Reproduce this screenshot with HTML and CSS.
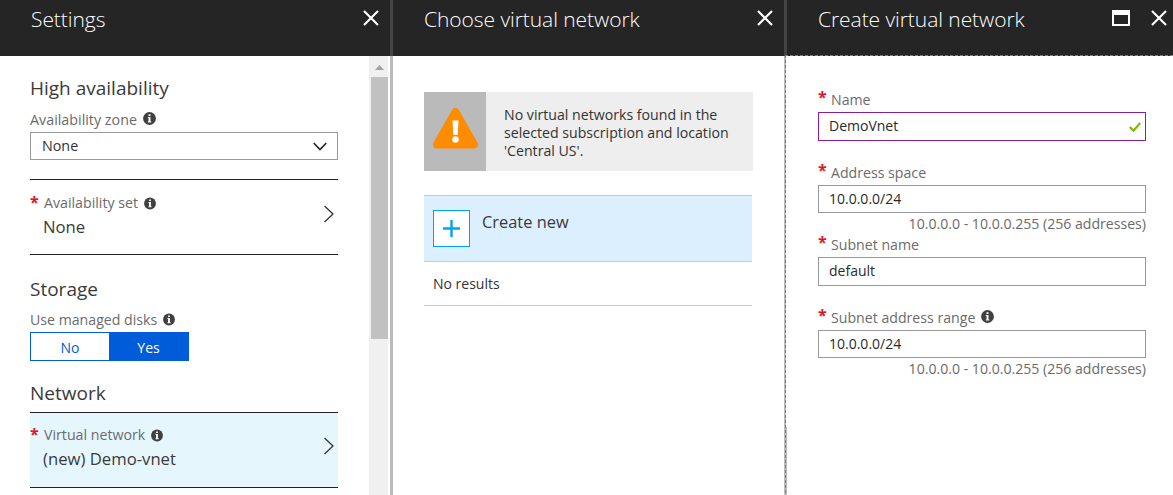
FILE: index.html
```html
<!DOCTYPE html>
<html lang="en">
<head>
<meta charset="utf-8">
<title>Create virtual network</title>
<link rel="stylesheet" href="styles.css">
</head>
<body>
<svg class="defs" width="0" height="0" aria-hidden="true">
  <symbol id="close" viewBox="0 0 16 16"><path d="M1 1 15 15M15 1 1 15" fill="none" stroke="#fff" stroke-width="2.1"/></symbol>
  <symbol id="info" viewBox="0 0 13 13"><circle cx="6.5" cy="6.5" r="6.4" fill="#404040"/><path d="M5.500 2.200h2v1.700h-2zM4.800 5h2.700v4.600h.8v1H4.800v-1h.7V6h-.7z" fill="#fff"/></symbol>
  <symbol id="next" viewBox="0 0 12 18"><path d="M1.5 1 10 9 1.5 17" fill="none" stroke="#333" stroke-width="1.3"/></symbol>
</svg>
<main class="blades">
  <section class="blade">
    <header class="bar"><h1>Settings</h1><svg class="close"><use href="#close"/></svg></header>
    <div class="content">
      <div class="form">
        <h2>High availability</h2>
        <div class="label zone"><span>Availability zone</span><svg class="info"><use href="#info"/></svg></div>
        <div class="select"><span>None</span><svg class="down" viewBox="0 0 14 9"><path d="M.7 1 7 7.5 13.3 1" fill="none" stroke="#222" stroke-width="1.6"/></svg></div>
        <div class="picker set">
          <b class="star">*</b>
          <div class="picked"><div class="label"><span>Availability set</span><svg class="info small"><use href="#info"/></svg></div><div class="value">None</div></div>
          <svg class="next"><use href="#next"/></svg>
        </div>
        <h2 class="storage">Storage</h2>
        <div class="label disks"><span>Use managed disks</span><svg class="info small"><use href="#info"/></svg></div>
        <div class="toggle"><span>No</span><span class="on">Yes</span></div>
        <h2 class="network">Network</h2>
        <div class="picker active">
          <b class="star">*</b>
          <div class="picked"><div class="label"><span>Virtual network</span><svg class="info small"><use href="#info"/></svg></div><div class="value">(new) Demo-vnet</div></div>
          <svg class="next"><use href="#next"/></svg>
        </div>
      </div>
      <div class="scrollbar"><i class="up"></i><i class="thumb"></i></div>
    </div>
  </section>
  <div class="divider"></div>
  <section class="blade second">
    <header class="bar"><h1>Choose virtual network</h1><svg class="close"><use href="#close"/></svg></header>
    <div class="list">
      <div class="notice">
        <div class="warn"><svg width="45" height="41" viewBox="0 0 45 41"><path d="M22.5 4 41 36.500H4Z" fill="#ff8c00" stroke="#ff8c00" stroke-width="8" stroke-linejoin="round"/><path d="M19.500 12.500h6l-.8 14.500h-4.400z" fill="#fff"/><circle cx="22.500" cy="31.500" r="3.200" fill="#fff"/></svg></div>
        <p>No virtual networks found in the<br>selected subscription and location<br>'Central US'.</p>
      </div>
      <div class="create"><span class="plus"><svg width="17" height="17"><path d="M8.500 0v17M0 8.500h17" stroke="#00a4ef" stroke-width="2.400"/></svg></span><span>Create new</span></div>
      <div class="empty">No results</div>
    </div>
  </section>
  <div class="divider split"><i class="dashes"></i></div>
  <section class="blade third">
    <header class="bar"><h1>Create virtual network</h1><svg class="restore" viewBox="0 0 18 16"><path d="M1 1h16v14H1z" fill="none" stroke="#fff" stroke-width="2"/><path d="M0 0h18v5H0z" fill="#fff"/></svg><svg class="close"><use href="#close"/></svg></header>
    <div class="fields">
      <div class="field"><div class="label"><b class="star">*</b><span>Name</span></div><div class="input valid"><span>DemoVnet</span><svg class="check" viewBox="0 0 12 10"><path d="M.8 5 4.500 8.700 11.200 1" fill="none" stroke="#7fba00" stroke-width="2.200"/></svg></div></div>
      <div class="field"><div class="label"><b class="star">*</b><span>Address space</span></div><div class="input">10.0.0.0/24</div><div class="hint">10.0.0.0 - 10.0.0.255 (256 addresses)</div></div>
      <div class="field"><div class="label"><b class="star">*</b><span>Subnet name</span></div><div class="input tall">default</div></div>
      <div class="field"><div class="label"><b class="star">*</b><span>Subnet address range</span><svg class="info"><use href="#info"/></svg></div><div class="input">10.0.0.0/24</div><div class="hint">10.0.0.0 - 10.0.0.255 (256 addresses)</div></div>
    </div>
  </section>
</main>
</body>
</html>
```
FILE: styles.css
```css
* { box-sizing: border-box; }
body { margin: 0; background: #fff; color: #333; font: 14px/20px "Open Sans", "Noto Sans", sans-serif; overflow: hidden; white-space: nowrap; }
svg { display: block; flex: none; }
.defs { position: absolute; }
h1, h2, p { margin: 0; font-weight: 400; }
.blades { display: flex; height: 495px; }
.blade { width: 390px; flex: none; }
.second { width: 391px; }
.third { width: 386px; }
.bar { height: 56px; background: #252525; color: #fff; display: flex; padding: 10px 11px 0 31px; }
.bar h1 { font-size: 21px; line-height: 18px; font-weight: 300; letter-spacing: -.06px; margin-right: auto; }
.close { width: 16px; height: 16px; }
.third .bar { padding-right: 6px; }
.restore { width: 18px; height: 16px; margin-right: 21px; }
.divider { width: 3px; background: linear-gradient(#444 56px, #bbb 56px); flex: none; }
.content { display: flex; height: 439px; }
.form { width: 308px; margin-left: 30px; padding-top: 22px; }
h2 { font-size: 19px; line-height: 20px; color: #3a3a3a; }
.label { display: flex; color: #6b6b6b; height: 20px; font-size: 14.300px; }
.picked .label { font-size: 14.200px; padding-left: 1px; }
.disks.label { font-size: 14.150px; }
.info { width: 13px; height: 13px; margin: 2px 0 0 6px; }
.info.small { width: 12px; height: 13px; margin: 4px 0 0 6px; }
.disks .small { margin-top: 3px; }
.zone { margin-top: 12px; }
.select { height: 28px; margin-top: 2px; border: 1px solid #999; padding: 3px 10px 0 11px; display: flex; justify-content: space-between; font-size: 14.300px; }
.down { width: 14px; height: 9px; margin-top: 6px; }
.picker { display: flex; height: 76px; border: solid #222; border-width: 1px 0; padding-top: 13px; }
.set { margin-top: 19px; }
.star { color: #e81123; font: 700 16px/18px "Open Sans", sans-serif; width: 13px; flex: none; }
.picked { flex: 1; }
.value { font-size: 16.700px; line-height: 22px; margin-top: 3px; color: #3a3a3a; }
.next { width: 12px; height: 18px; margin: 12px 3px 0 0; }
.storage { margin-top: 24px; }
.disks { margin-top: 11px; }
.toggle { display: flex; width: 159px; height: 29px; margin-top: 2px; border: 1px solid #015cda; color: #015cda; text-align: center; line-height: 30px; }
.toggle span { width: 78px; flex: none; }
.toggle .on { width: 79px; background: #015cda; color: #fff; }
.network { margin-top: 22px; }
.active { background: #e5f7fd; margin-top: 9px; padding-top: 12px; }
.scrollbar { width: 21px; margin-left: 31px; background: linear-gradient(90deg, #f0f0f0 19px, #fff 19px); padding-top: 9px; }
.up { display: block; width: 9px; height: 5px; margin: 0 0 7px 6px; background: #a3a3a3; clip-path: polygon(50% 0, 100% 100%, 0 100%); }
.thumb { display: block; width: 17px; height: 262px; margin-left: 2px; background: #c1c1c1; }
.list { padding: 36px 0 0 31px; }
.notice { display: flex; width: 329px; height: 79px; background: #eee; }
.warn { width: 62px; background: #bababa; padding: 16px 0 0 9px; }
.notice p { padding: 14px 0 0 18px; font-size: 14.150px; line-height: 18px; }
.create { display: flex; width: 328px; height: 67px; margin-top: 24px; padding: 14px 0 0 9px; border: solid #c8c8c8; border-width: 1px 0; background: #dceffe; font-size: 16.400px; line-height: 24px; color: #3a3a3a; }
.plus { width: 37px; height: 37px; margin-right: 12px; border: 1px solid #00a4ef; background: #fff; display: grid; place-items: center; }
.empty { width: 328px; height: 44px; border-bottom: 1px solid #c8c8c8; padding: 12px 0 0 9px; }
.split { position: relative; background: linear-gradient(#444 56px, transparent 56px), linear-gradient(#bbb, #bbb) 0 56px / 2px 100% no-repeat, linear-gradient(#bbb, #bbb) 0 427px / 3px 68px no-repeat; }
.dashes { position: absolute; left: 1px; top: 55px; width: 388px; height: 440px; background: repeating-linear-gradient(90deg, #00abec 0 3px, transparent 3px 5px) 0 0 / 100% 1px no-repeat, repeating-linear-gradient(#00abec 0 3px, transparent 3px 5px) 0 0 / 1px 100% no-repeat; }
.fields { padding: 34px 0 0 31px; width: 359px; }
.field { height: 73px; }
.field:nth-child(2) { height: 72px; }
.field .star { margin-top: -2px; }
.field .label { height: 22px; line-height: 20px; font-size: 14.150px; }
.input { height: 28px; border: 1px solid #999; padding: 3px 4px 0 10px; display: flex; justify-content: space-between; color: #2a2a2a; }
.valid, .tall { height: 29px; }
.valid { border-color: #881fa1; }
.check { width: 12px; height: 10px; margin-top: 6px; }
.hint { text-align: right; color: #6b6b6b; font-size: 14.100px; line-height: 22px; }
```
